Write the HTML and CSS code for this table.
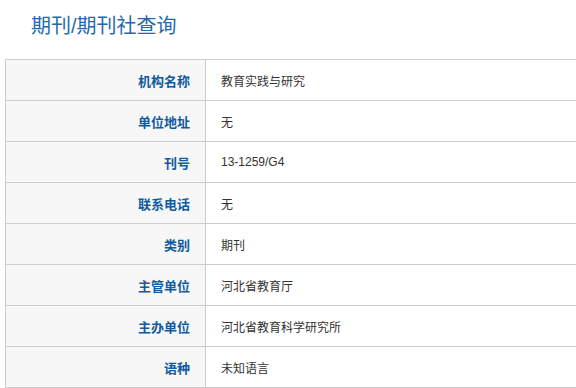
FILE: index.html
```html
<!DOCTYPE html>
<html lang="zh">
<head>
<meta charset="utf-8">
<title>期刊/期刊社查询</title>
<link rel="stylesheet" href="styles.css">
</head>
<body>
<div class="page">
  <h1 class="title">期刊/期刊社查询</h1>
  <div class="clip">
    <table class="info">
      <tr><th>机构名称</th><td>教育实践与研究</td></tr>
      <tr><th>单位地址</th><td>无</td></tr>
      <tr><th>刊号</th><td>13-1259/G4</td></tr>
      <tr><th>联系电话</th><td>无</td></tr>
      <tr><th>类别</th><td>期刊</td></tr>
      <tr><th>主管单位</th><td>河北省教育厅</td></tr>
      <tr><th>主办单位</th><td>河北省教育科学研究所</td></tr>
      <tr><th>语种</th><td>未知语言</td></tr>
    </table>
  </div>
</div>
</body>
</html>
```
FILE: styles.css
```css
html, body {
  margin: 0;
  padding: 0;
  overflow: hidden;
  background: #fff;
}
.page {
  padding: 0 0 0 5px;
  font-family: "Liberation Sans", "Noto Sans CJK SC", sans-serif;
}
.title {
  margin: 0;
  padding: 12px 0 0 26px;
  height: 59px;
  box-sizing: border-box;
  font-size: 20px;
  font-weight: normal;
  line-height: 28px;
  color: #2468b0;
}
.clip {
  overflow: hidden;
  width: 571px;
}
.info {
  width: 600px;
  border-collapse: collapse;
  font-size: 13px;
}
.info th, .info td {
  border: 1px solid #cccccc;
  height: 41px;
  padding: 0 15px;
  box-sizing: border-box;
}
.info th {
  width: 200px;
  background: #f7f7f7;
  color: #0f5aa0;
  text-align: right;
  font-weight: bold;
}
.info td {
  color: #333;
  font-size: 12px;
  text-align: left;
}
```
